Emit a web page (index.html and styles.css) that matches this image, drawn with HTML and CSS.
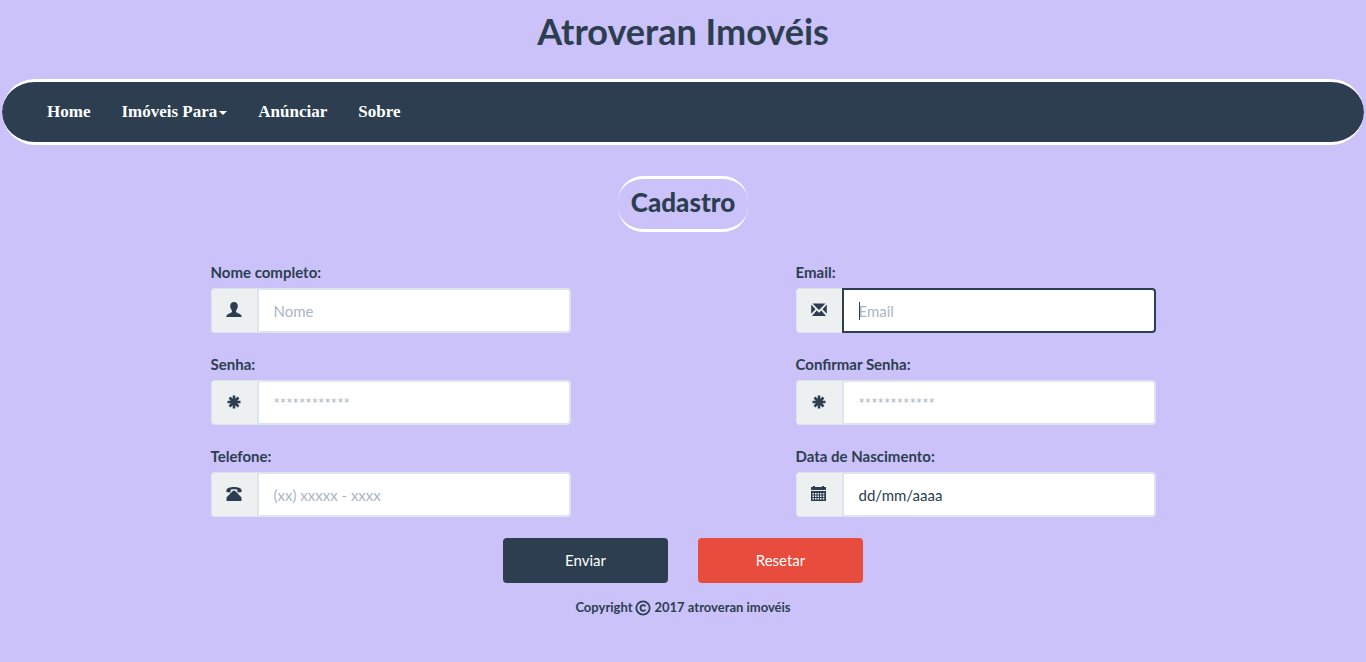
FILE: index.html
```html
<!DOCTYPE html>
<html lang="pt-BR">
<head>
<meta charset="utf-8">
<meta name="viewport" content="width=device-width, initial-scale=1">
<title>Atroveran Imovéis</title>
<link rel="stylesheet" href="styles.css">
</head>
<body>
<header>
  <h1 class="brand">Atroveran Imovéis</h1>
  <nav class="navbar">
    <a class="nav-link" href="#">Home</a>
    <a class="nav-link" href="#">Imóveis Para<span class="caret"></span></a>
    <a class="nav-link" href="#">Anúnciar</a>
    <a class="nav-link" href="#">Sobre</a>
  </nav>
</header>
<main>
  <h2 class="title">Cadastro</h2>
  <form class="form">
    <div class="fields">
      <div class="field">
        <label for="nome">Nome completo:</label>
        <div class="group">
          <span class="addon"><svg class="icon" viewBox="0 0 16 16"><path d="M8 0C5.400 0 4.200 1.700 4.200 4c0 1.300.3 2.100.8 2.900.5.900 1 1.400 1 2.200 0 1.500-1 1.900-2.600 2.500C1.600 12.200.4 12.900.3 15h15.400c-.1-2.100-1.300-2.800-3.100-3.400C11 11 10 10.600 10 9.100c0-.8.5-1.300 1-2.200.5-.8.800-1.600.8-2.900C11.800 1.700 10.600 0 8 0z"/></svg></span>
          <input class="input" id="nome" type="text" placeholder="Nome">
        </div>
      </div>
      <div class="field">
        <label for="email">Email:</label>
        <div class="group">
          <span class="addon"><svg class="icon" viewBox="0 0 16 16"><path d="M1.500 1.500h13L8 8zM.2 2.500l4.300 4.700-4.300 4.500zM15.800 2.500v9.200l-4.300-4.500zM5.700 8.500 8 10.700l2.300-2.200 4.700 5.500H1z"/></svg></span>
          <input class="input" id="email" type="email" placeholder="Email" autofocus>
          <span class="cursor"></span>
        </div>
      </div>
      <div class="field">
        <label for="senha">Senha:</label>
        <div class="group">
          <span class="addon"><svg class="icon" viewBox="0 0 16 16"><path class="star" d="M8 1.500v13M1.500 8h13M3.500 3.500l9 9M12.500 3.500l-9 9"/></svg></span>
          <input class="input" id="senha" type="password" placeholder="************">
        </div>
      </div>
      <div class="field">
        <label for="confirmar">Confirmar Senha:</label>
        <div class="group">
          <span class="addon"><svg class="icon" viewBox="0 0 16 16"><path class="star" d="M8 1.500v13M1.500 8h13M3.500 3.500l9 9M12.500 3.500l-9 9"/></svg></span>
          <input class="input" id="confirmar" type="password" placeholder="************">
        </div>
      </div>
      <div class="field">
        <label for="telefone">Telefone:</label>
        <div class="group">
          <span class="addon"><svg class="icon" viewBox="0 0 16 16"><path d="M.4 6V4.200C.8 2 4 1 8 1s7.200 1 7.600 3.200V6l-3.300.5c-.6 0-.9-.4-.9-1V3.700C9 3.100 7 3.100 4.600 3.700v1.800c0 .6-.3 1-.9 1zM7 4.800h2l1 1 5.500 5.700V15H.5v-3.500L6 5.800z"/></svg></span>
          <input class="input" id="telefone" type="tel" placeholder="(xx) xxxxx - xxxx">
        </div>
      </div>
      <div class="field">
        <label for="nascimento">Data de Nascimento:</label>
        <div class="group">
          <span class="addon"><svg class="icon" viewBox="0 0 16 16"><path fill-rule="evenodd" d="M2 0h2v1h7V0h2v1h2v3H0V1h2zM0 5h15v10H0zM1.500 7v1.500H3V7zM4 7v1.500h1.500V7zM6.500 7v1.500H8V7zM9 7v1.500h1.500V7zM11.800 7v1.500h1.500V7zM1.500 9.500V11H3V9.500zM4 9.500V11h1.500V9.500zM6.500 9.500V11H8V9.500zM9 9.500V11h1.500V9.500zM11.800 9.500V11h1.500V9.500zM1.500 12v1.500H3V12zM4 12v1.500h1.500V12zM6.500 12v1.500H8V12zM9 12v1.500h1.500V12zM11.800 12v1.500h1.500V12z"/></svg></span>
          <input class="input input-date" id="nascimento" type="text" placeholder="dd/mm/aaaa">
        </div>
      </div>
    </div>
    <div class="actions">
      <button class="button" type="submit">Enviar</button>
      <button class="button button-danger" type="reset">Resetar</button>
    </div>
  </form>
</main>
<footer class="footer">
  <span>Copyright</span>
  <svg class="copy" viewBox="0 0 16 16"><circle cx="8" cy="8" r="6.700"/><path d="M10.500 6.300C9.900 5.500 9.100 5.200 8.200 5.200 6.500 5.200 5.500 6.400 5.500 8s1 2.800 2.700 2.800c.9 0 1.700-.3 2.300-1.100"/></svg>
  <span>2017 atroveran imovéis</span>
</footer>
</body>
</html>
```
FILE: styles.css
```css
* { box-sizing: border-box; }

body {
  margin: 0;
  background: #cbc2f9;
  color: #2c3e50;
  font: 15px/21px Lato, sans-serif;
}

.brand {
  margin: 0;
  padding: 10px 0 26px;
  font: bold 36px/43px Lato, sans-serif;
  text-align: center;
}

.navbar {
  display: flex;
  align-items: center;
  gap: 31px;
  min-height: 66px;
  margin: 0 2px;
  padding: 0 45px;
  background: #2c3e50;
  border: solid #fff;
  border-width: 3px 0;
  border-radius: 35px;
}

.nav-link {
  color: #fff;
  font: bold 17px/20px "Liberation Serif", serif;
  text-decoration: none;
}

.caret {
  display: inline-block;
  margin-left: 2px;
  border: 4px solid transparent;
  border-top-color: #fff;
  border-bottom: 0;
  vertical-align: middle;
}

.title {
  width: fit-content;
  margin: 31px auto 30px;
  padding: 8px 13px 12px;
  border: solid #fff;
  border-width: 3px 0;
  border-radius: 25px;
  font: 900 26px/30px Lato, sans-serif;
}

.form {
  max-width: 945px;
  margin: 0 auto;
}

.fields {
  display: grid;
  grid-template-columns: 1fr 1fr;
  gap: 21px 225px;
}

label {
  display: block;
  margin-bottom: 5px;
  font-weight: bold;
}

.group {
  display: flex;
  position: relative;
}

.addon {
  display: flex;
  flex: none;
  align-items: center;
  justify-content: center;
  width: 46px;
  padding-bottom: 2px;
  background: #ecf0f1;
  border: 1px solid #dce4ec;
  border-right: 0;
  border-radius: 4px 0 0 4px;
}

.icon {
  width: 16px;
  height: 16px;
  fill: #2c3e50;
}

.star {
  stroke: #2c3e50;
  stroke-width: 2.6;
}

.input {
  flex: 1;
  min-width: 0;
  height: 45px;
  padding: 10px 15px;
  background: #fff;
  border: 2px solid #dce4ec;
  border-radius: 0 4px 4px 0;
  color: #2c3e50;
  font: 15px/21px Lato, sans-serif;
}

.input::placeholder { color: #acb6c0; }

.input-date::placeholder { color: #2c3e50; }

.input:focus {
  border-color: #2c3e50;
  outline: 0;
  caret-color: transparent;
}

.cursor {
  display: none;
  position: absolute;
  top: 14px;
  left: 63px;
  width: 1px;
  height: 18px;
  background: #2c3e50;
}

.input:focus:placeholder-shown + .cursor { display: block; }

.actions {
  display: flex;
  justify-content: center;
  gap: 30px;
  margin-top: 21px;
}

.button {
  width: 165px;
  height: 45px;
  background: #2c3e50;
  border: 0;
  border-radius: 4px;
  color: #fff;
  font: 15px/21px Lato, sans-serif;
}

.button-danger { background: #e74c3c; }

.footer {
  display: flex;
  align-items: center;
  justify-content: center;
  gap: 3px;
  margin-top: 14px;
  font: bold 13px/21px Lato, sans-serif;
}

.copy {
  width: 16px;
  height: 16px;
  fill: none;
  stroke: #2c3e50;
  stroke-width: 1.8;
}
```
